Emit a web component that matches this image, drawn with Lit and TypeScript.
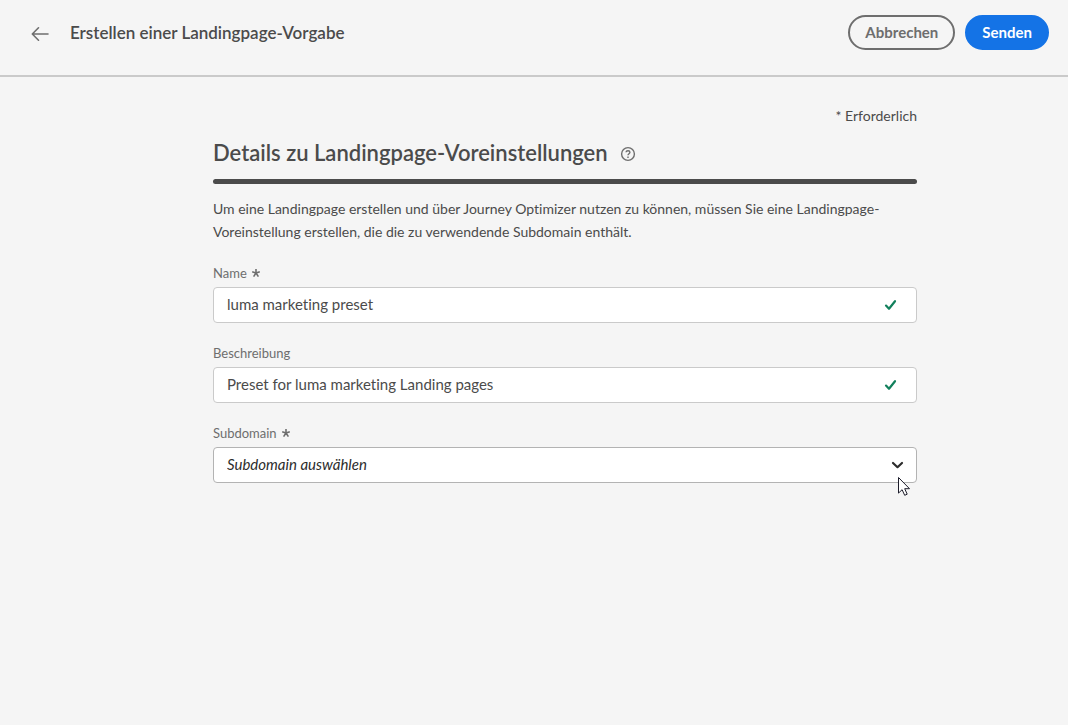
import { LitElement, html, css, svg, nothing } from "lit";
import { customElement, property } from "lit/decorators.js";

const asterisk = html`<svg class="asterisk" viewBox="0 0 10 10" aria-hidden="true">
  <path d="M5 5V1M5 5L1.2 3.8M5 5l3.8-1.2M5 5L2.6 8.6M5 5l2.4 3.6" />
</svg>`;

@customElement("preset-field")
class PresetField extends LitElement {
  @property() label = "";
  @property() value = "";
  @property() placeholder = "";
  @property({ type: Boolean }) required = false;
  @property({ type: Boolean }) picker = false;

  static styles = css`
    :host {
      display: block;
    }
    .label {
      display: flex;
      align-items: center;
      gap: 4px;
      height: 16px;
      margin-bottom: 6px;
      font-size: 13px;
      line-height: 16px;
      color: #6e6e6e;
    }
    .asterisk {
      width: 10px;
      height: 10px;
      fill: none;
      stroke: #6e6e6e;
      stroke-width: 1.6;
    }
    .box {
      display: grid;
      align-items: center;
    }
    .control {
      grid-area: 1 / 1;
      box-sizing: border-box;
      width: 100%;
      height: 36px;
      margin: 0;
      padding: 0 48px 2px 13px;
      border: 1px solid #cacaca;
      border-radius: 4px;
      background: #fff;
      color: #4b4b4b;
      font: inherit;
      font-size: 15px;
      font-variant-ligatures: none;
      appearance: none;
      outline: none;
    }
    .picker {
      border-color: #b3b3b3;
      color: #2c2c2c;
      font-style: italic;
    }
    .mark {
      grid-area: 1 / 1;
      justify-self: end;
      margin-right: 20px;
      width: 13px;
      height: 12px;
      fill: none;
      stroke: #12805c;
      stroke-width: 2.2;
      stroke-linecap: round;
      stroke-linejoin: round;
      pointer-events: none;
    }
    .chevron {
      margin-right: 13px;
      stroke: #2c2c2c;
    }
  `;

  render() {
    return html`
      <label class="label" for="control">${this.label}${this.required ? asterisk : nothing}</label>
      <div class="box">
        ${this.picker
          ? html`<select id="control" class="control picker" ?required=${this.required}>
                <option value="">${this.placeholder}</option>
              </select>
              <svg class="mark chevron" viewBox="0 0 13 12" aria-hidden="true">
                ${svg`<path d="M2 4l4.5 4.2L11 4" />`}
              </svg>`
          : html`<input id="control" class="control" type="text" .value=${this.value} ?required=${this.required} />
              <svg class="mark" viewBox="0 0 13 12" aria-hidden="true">
                ${svg`<path d="M2 6.6l3 3.2L11 2.2" />`}
              </svg>`}
      </div>
    `;
  }
}

@customElement("app-root")
class AppRoot extends LitElement {
  static styles = css`
    :host {
      display: block;
      min-height: 100vh;
      background: #f5f5f5;
      color: #4b4b4b;
      font-family: Lato, "Open Sans", sans-serif;
      font-size: 15px;
      font-variant-ligatures: none;
    }
    .header {
      display: flex;
      align-items: center;
      gap: 10px;
      padding: 15px 19px 25px 25px;
      border-bottom: 2px solid #cacaca;
    }
    .back {
      display: flex;
      padding: 8px 6px 6px;
      border: 0;
      background: none;
    }
    .arrow {
      width: 18px;
      height: 16px;
      fill: none;
      stroke: #6e6e6e;
      stroke-width: 1.6;
      stroke-linecap: round;
      stroke-linejoin: round;
    }
    .title {
      flex: 1;
      margin: 0 0 0 5px;
      font-size: 17px;
      line-height: 24px;
      font-weight: 600;
    }
    .button {
      box-sizing: border-box;
      height: 35px;
      padding: 0 15px 2px;
      border: 2px solid #6e6e6e;
      border-radius: 18px;
      background: none;
      color: #6e6e6e;
      font: inherit;
      font-weight: 700;
    }
    .primary {
      border-color: #1473e6;
      background: #1473e6;
      color: #fff;
    }
    .main {
      padding: 28px 151px 28px 213px;
    }
    .required {
      margin: 0;
      font-size: 14px;
      text-align: right;
      line-height: 22px;
    }
    .heading {
      display: flex;
      align-items: center;
      gap: 12px;
      padding: 10px 0;
    }
    .name {
      margin: 0;
      font-size: 22px;
      line-height: 32px;
      font-weight: 600;
    }
    .help {
      display: flex;
      padding: 2px 0 0;
      border: 0;
      background: none;
    }
    .question {
      width: 16px;
      height: 16px;
      fill: none;
      stroke: #6e6e6e;
      stroke-width: 1.4;
    }
    .rule {
      height: 5px;
      margin: 0;
      border: 0;
      border-radius: 3px;
      background: #4b4b4b;
    }
    .intro {
      margin: 13px 0 22px;
      font-size: 14px;
      line-height: 23px;
    }
    .fields {
      display: grid;
      gap: 22px;
    }
    .cursor {
      position: absolute;
      left: 897px;
      top: 476px;
      width: 14px;
      height: 21px;
    }
  `;

  render() {
    return html`
      <header class="header">
        <button class="back" aria-label="Zurück">
          <svg class="arrow" viewBox="0 0 18 16"><path d="M17 8H1.5M7.5 1.8L1.3 8l6.2 6.2" /></svg>
        </button>
        <h1 class="title">Erstellen einer Landingpage-Vorgabe</h1>
        <button class="button">Abbrechen</button>
        <button class="button primary">Senden</button>
      </header>
      <main class="main">
        <p class="required">* Erforderlich</p>
        <div class="heading">
          <h2 class="name">Details zu Landingpage-Voreinstellungen</h2>
          <button class="help" aria-label="Hilfe">
            <svg class="question" viewBox="0 0 16 16">
              <circle cx="8" cy="8" r="6.4" />
              <path d="M6 6.2C6.2 4.3 9.9 4.2 9.9 6.3 9.9 7.7 8 7.7 8 9.3M8 10.4v1.5" />
            </svg>
          </button>
        </div>
        <hr class="rule" />
        <p class="intro">
          Um eine Landingpage erstellen und über Journey Optimizer nutzen zu können, müssen Sie eine
          Landingpage-Voreinstellung erstellen, die die zu verwendende Subdomain enthält.
        </p>
        <form class="fields">
          <preset-field label="Name" value="luma marketing preset" required></preset-field>
          <preset-field label="Beschreibung" value="Preset for luma marketing Landing pages"></preset-field>
          <preset-field label="Subdomain" placeholder="Subdomain auswählen" picker required></preset-field>
        </form>
      </main>
      <svg class="cursor" viewBox="0 0 14 21" aria-hidden="true">
        <path d="M1.5 1.5v15.6l3.6-3.4 2.6 5.6 2.5-1.1-2.5-5.5h4.8z" fill="#fff" stroke="#1d1d2b" stroke-width="1" />
      </svg>
    `;
  }
}
